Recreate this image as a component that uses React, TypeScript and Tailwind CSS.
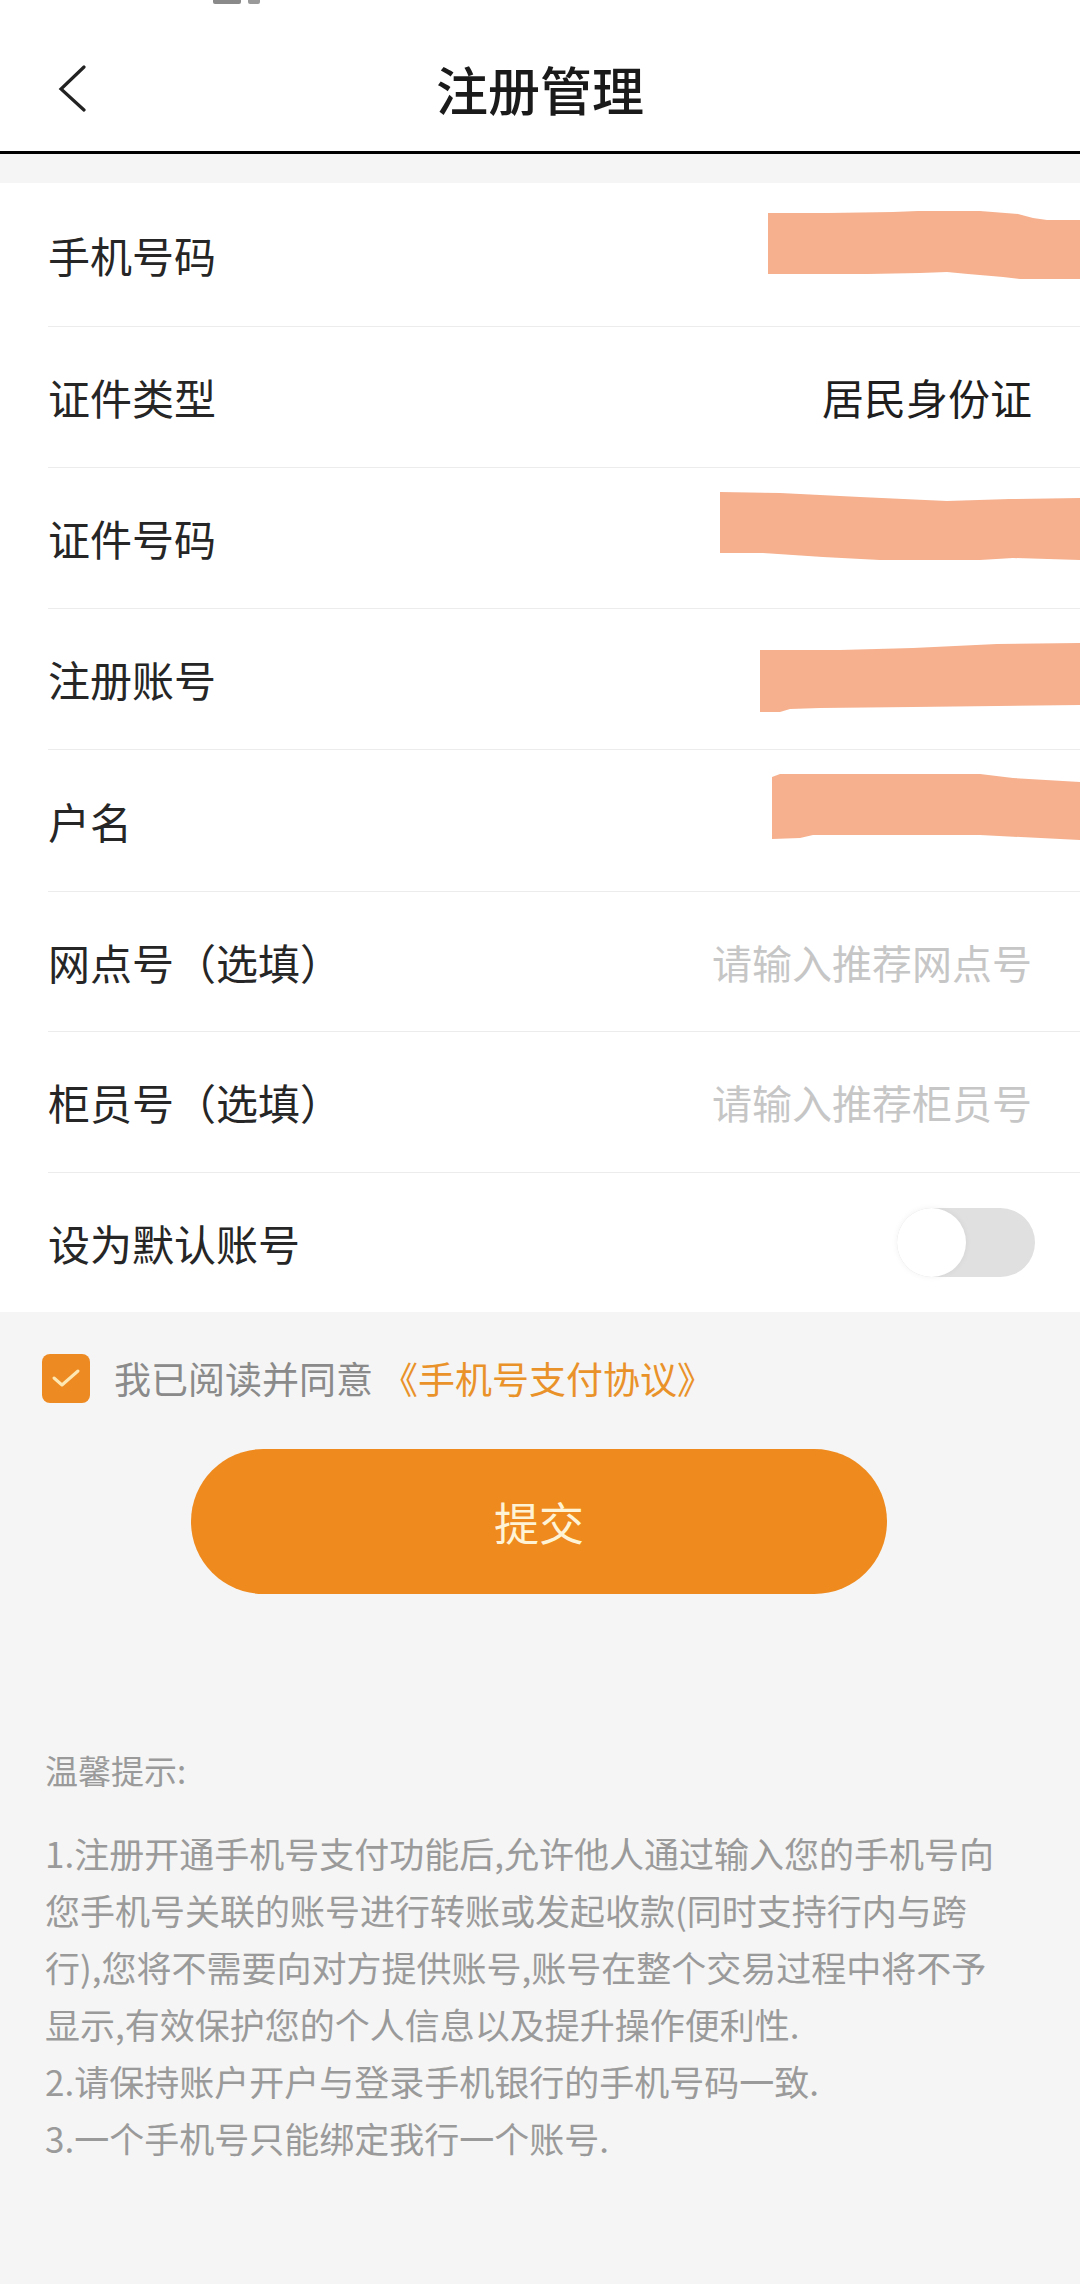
import React from "react";

const FONT = "font-['Noto_Sans_CJK_SC','Noto_Sans',sans-serif]";

function Redact({ w, h, d }: { w: number; h: number; d: string }) {
  return (
    <svg width={w} height={h} viewBox={`0 0 ${w} ${h}`} className="shrink-0 -mr-[48px] block">
      <path d={d} fill="#f6b08e" />
    </svg>
  );
}

function Row({
  label,
  children,
  h,
  last,
}: {
  label: string;
  children?: React.ReactNode;
  h: string;
  last?: boolean;
}) {
  return (
    <div
      className={`ml-[48px] pr-[48px] flex items-center justify-between ${h} ${
        last ? "" : "border-b border-[#ececec]"
      }`}
    >
      <span className="text-[42px] leading-none text-[#262626] whitespace-nowrap">{label}</span>
      {children}
    </div>
  );
}

export default function App() {
  return (
    <div className={`w-[1080px] min-h-[2284px] bg-[#f5f5f5] ${FONT}`}>
      {/* header */}
      <div className="bg-white h-[151px] flex flex-col">
        <div className="h-[4px] flex gap-[7px] ml-[213px]">
          <div className="w-[28px] h-[4px] bg-[#8a8a8a] rounded-b-[2px]" />
          <div className="w-[12px] h-[4px] bg-[#9a9a9a] rounded-b-[2px]" />
        </div>
        <div className="flex-1 pt-[23px] grid grid-cols-[120px_1fr_120px] items-center">
          <div className="pl-[58px] flex items-center">
            <svg width="30" height="48" viewBox="0 0 30 48">
              <path d="M26 2 L3 24 L26 45" fill="none" stroke="#222" strokeWidth="3.2" strokeLinecap="round" strokeLinejoin="miter" />
            </svg>
          </div>
          <div className="text-center text-[52px] leading-none text-[#1a1a1a] font-medium">注册管理</div>
          <div />
        </div>
      </div>
      <div className="h-[3px] bg-black" />
      <div className="h-[29px]" />

      {/* list */}
      <div className="bg-white">
        <Row label="手机号码" h="h-[144px]">
          <Redact
            w={312}
            h={144}
            d="M0 30 L60 30 L125 29 L150 28 L212 28 L250 31 L265 35 L279 37 L312 37 L312 96 L252 96 L235 94 L200 91 L179 89 L152 90 L100 91 L0 91 Z"
          />
        </Row>
        <Row label="证件类型" h="h-[141px]">
          <span className="text-[42px] leading-none text-[#1f1f1f] whitespace-nowrap">居民身份证</span>
        </Row>
        <Row label="证件号码" h="h-[141px]">
          <Redact
            w={360}
            h={141}
            d="M0 24 L60 25 L140 29 L227 33 L290 31 L360 30 L360 92 L293 90 L260 92 L160 92 L103 89 L43 85 L0 85 Z"
          />
        </Row>
        <Row label="注册账号" h="h-[141px]">
          <Redact
            w={320}
            h={141}
            d="M0 41 L80 41 L153 39 L237 35 L320 34 L320 96 L237 97 L153 98 L60 99 L30 100 L20 103 L0 103 Z"
          />
        </Row>
        <Row label="户名" h="h-[142px]">
          <Redact
            w={308}
            h={142}
            d="M0 27 L8 24 L120 24 L208 24 L241 28 L308 32 L308 90 L208 85 L41 85 L28 88 L0 89 Z"
          />
        </Row>
        <Row label="网点号（选填）" h="h-[140px]">
          <span className="text-[40px] leading-none text-[#c6c6c6] whitespace-nowrap">请输入推荐网点号</span>
        </Row>
        <Row label="柜员号（选填）" h="h-[141px]">
          <span className="text-[40px] leading-none text-[#c6c6c6] whitespace-nowrap">请输入推荐柜员号</span>
        </Row>
        <div className="ml-[48px] pr-[45px] flex items-center justify-between h-[139px]">
          <span className="text-[42px] leading-none text-[#262626] whitespace-nowrap">设为默认账号</span>
          <div className="w-[138px] h-[69px] rounded-full bg-[#e0e0e0] flex items-center">
            <div className="w-[69px] h-[69px] rounded-full bg-white shadow-[0_0_6px_rgba(0,0,0,0.06)]" />
          </div>
        </div>
      </div>

      {/* agreement */}
      <div className="pt-[42px] pl-[42px] flex items-center">
        <div className="w-[48px] h-[49px] rounded-[8px] bg-[#ee8a22] flex items-center justify-center">
          <svg width="30" height="22" viewBox="0 0 30 22">
            <path d="M3 10 L11 17 L27 3" fill="none" stroke="#fde8b4" strokeWidth="3" strokeLinecap="round" strokeLinejoin="round" />
          </svg>
        </div>
        <span className="ml-[24px] text-[37px] leading-none text-[#8a8a8a] whitespace-nowrap">我已阅读并同意</span>
        <span className="ml-[8px] text-[37px] leading-none text-[#ea922a] whitespace-nowrap">《手机号支付协议》</span>
      </div>

      {/* submit */}
      <div className="pt-[46px] flex justify-center">
        <button className="w-[696px] h-[145px] rounded-full bg-[#ee8a1e] text-[45px] leading-none text-[#fff3d6] ml-[-2px]">
          提交
        </button>
      </div>

      {/* tips */}
      <div className="pt-[148px] px-[45px] text-[#9a9a9a]">
        <div className="text-[33px] leading-[57px]">温馨提示:</div>
        <p className="mt-[25px] text-[35px] leading-[57px] whitespace-nowrap">
          1.注册开通手机号支付功能后,允许他人通过输入您的手机号向
          <br />
          您手机号关联的账号进行转账或发起收款(同时支持行内与跨
          <br />
          行),您将不需要向对方提供账号,账号在整个交易过程中将不予
          <br />
          显示,有效保护您的个人信息以及提升操作便利性.
          <br />
          2.请保持账户开户与登录手机银行的手机号码一致.
          <br />
          3.一个手机号只能绑定我行一个账号.
        </p>
      </div>
    </div>
  );
}
